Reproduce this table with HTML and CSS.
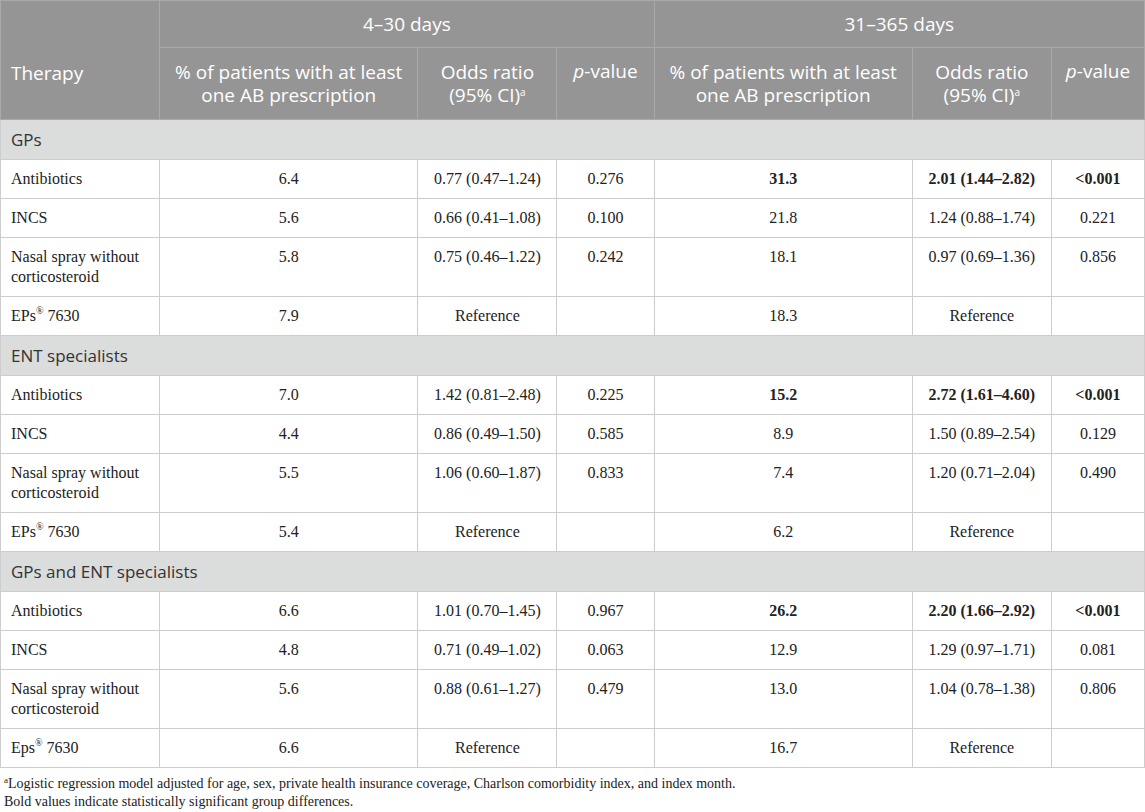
FILE: index.html
```html
<!DOCTYPE html>
<html lang="en">
<head>
  <meta charset="UTF-8" />
  <meta name="viewport" content="width=device-width, initial-scale=1.0">
  <title>Antibiotic prescriptions by therapy</title>
  <link rel="stylesheet" href="styles.css">
</head>
<body>
  <table class="results">
    <colgroup>
      <col class="c-therapy">
      <col class="c-pct">
      <col class="c-odds">
      <col class="c-p">
      <col class="c-pct">
      <col class="c-odds">
      <col class="c-p2">
    </colgroup>
    <thead>
      <tr class="head-top">
        <th rowspan="2" class="therapy">Therapy</th>
        <th colspan="3">4–30 days</th>
        <th colspan="3">31–365 days</th>
      </tr>
      <tr class="head-sub">
        <th>% of patients with at least one AB prescription</th>
        <th>Odds ratio (95% CI)<sup>a</sup></th>
        <th class="top"><i>p</i>-value</th>
        <th>% of patients with at least one AB prescription</th>
        <th>Odds ratio (95% CI)<sup>a</sup></th>
        <th class="top"><i>p</i>-value</th>
      </tr>
    </thead>
    <tbody>
      <tr class="group"><td colspan="7">GPs</td></tr>
      <tr>
        <td>Antibiotics</td><td>6.4</td><td>0.77 (0.47–1.24)</td><td>0.276</td>
        <td><b>31.3</b></td><td><b>2.01 (1.44–2.82)</b></td><td><b>&lt;0.001</b></td>
      </tr>
      <tr>
        <td>INCS</td><td>5.6</td><td>0.66 (0.41–1.08)</td><td>0.100</td>
        <td>21.8</td><td>1.24 (0.88–1.74)</td><td>0.221</td>
      </tr>
      <tr>
        <td>Nasal spray without corticosteroid</td><td>5.8</td><td>0.75 (0.46–1.22)</td><td>0.242</td>
        <td>18.1</td><td>0.97 (0.69–1.36)</td><td>0.856</td>
      </tr>
      <tr>
        <td>EPs<sup>®</sup> 7630</td><td>7.9</td><td>Reference</td><td></td>
        <td>18.3</td><td>Reference</td><td></td>
      </tr>

      <tr class="group"><td colspan="7">ENT specialists</td></tr>
      <tr>
        <td>Antibiotics</td><td>7.0</td><td>1.42 (0.81–2.48)</td><td>0.225</td>
        <td><b>15.2</b></td><td><b>2.72 (1.61–4.60)</b></td><td><b>&lt;0.001</b></td>
      </tr>
      <tr>
        <td>INCS</td><td>4.4</td><td>0.86 (0.49–1.50)</td><td>0.585</td>
        <td>8.9</td><td>1.50 (0.89–2.54)</td><td>0.129</td>
      </tr>
      <tr>
        <td>Nasal spray without corticosteroid</td><td>5.5</td><td>1.06 (0.60–1.87)</td><td>0.833</td>
        <td>7.4</td><td>1.20 (0.71–2.04)</td><td>0.490</td>
      </tr>
      <tr>
        <td>EPs<sup>®</sup> 7630</td><td>5.4</td><td>Reference</td><td></td>
        <td>6.2</td><td>Reference</td><td></td>
      </tr>

      <tr class="group"><td colspan="7">GPs and ENT specialists</td></tr>
      <tr>
        <td>Antibiotics</td><td>6.6</td><td>1.01 (0.70–1.45)</td><td>0.967</td>
        <td><b>26.2</b></td><td><b>2.20 (1.66–2.92)</b></td><td><b>&lt;0.001</b></td>
      </tr>
      <tr>
        <td>INCS</td><td>4.8</td><td>0.71 (0.49–1.02)</td><td>0.063</td>
        <td>12.9</td><td>1.29 (0.97–1.71)</td><td>0.081</td>
      </tr>
      <tr>
        <td>Nasal spray without corticosteroid</td><td>5.6</td><td>0.88 (0.61–1.27)</td><td>0.479</td>
        <td>13.0</td><td>1.04 (0.78–1.38)</td><td>0.806</td>
      </tr>
      <tr>
        <td>Eps<sup>®</sup> 7630</td><td>6.6</td><td>Reference</td><td></td>
        <td>16.7</td><td>Reference</td><td></td>
      </tr>
    </tbody>
  </table>

  <div class="notes">
    <p><sup>a</sup>Logistic regression model adjusted for age, sex, private health insurance coverage, Charlson comorbidity index, and index month.</p>
    <p>Bold values indicate statistically significant group differences.</p>
  </div>
</body>
</html>
```

FILE: styles.css
```css
body {
  margin: 0;
  background-color: white;
  color: #222222;
  font-family: "Liberation Serif", "Times New Roman", serif;
}
.results {
  width: 1145px;
  table-layout: fixed;
  border-collapse: collapse;
}
.c-therapy { width: 159px; }
.c-pct { width: 258px; }
.c-odds { width: 139px; }
.c-p { width: 97px; }
.c-p2 { width: 93px; }

/* kopf */
.results th {
  background-color: #959595;
  color: white;
  font-family: "Open Sans", "DejaVu Sans", sans-serif;
  font-weight: 400;
  font-size: 19px;
  line-height: 23px;
  border: 1px solid #a9a9a9;
  padding: 0 10px;
  text-align: center;
  vertical-align: middle;
}
.results th sup {
  font-size: 10px;
  line-height: 0;
  vertical-align: 6px;
}
.head-top {
  height: 47px;
}
.head-sub {
  height: 72px;
}
.results th.therapy {
  text-align: left;
  vertical-align: top;
  padding-top: 61px;
}
.results th.top {
  vertical-align: top;
  padding-top: 12px;
}

/* daten */
.results td {
  font-size: 16px;
  line-height: 20px;
  padding: 9px 10px;
  border: 1px solid #cdcdcd;
  text-align: center;
  vertical-align: top;
}
.results td:first-child {
  text-align: left;
}
.results td sup {
  font-size: 10px;
  line-height: 0;
  vertical-align: 7px;
}
.results tr.group td {
  background-color: #dbdcdc;
  color: #333333;
  font-family: "Open Sans", "DejaVu Sans", sans-serif;
  font-size: 17px;
  line-height: 22px;
  padding: 9px 10px 8px;
}

.notes {
  padding: 7px 4px 0;
  font-size: 14px;
  line-height: 18px;
}
.notes p {
  margin: 0;
}
.notes sup {
  font-size: 9px;
  line-height: 0;
  vertical-align: 5px;
}
```
